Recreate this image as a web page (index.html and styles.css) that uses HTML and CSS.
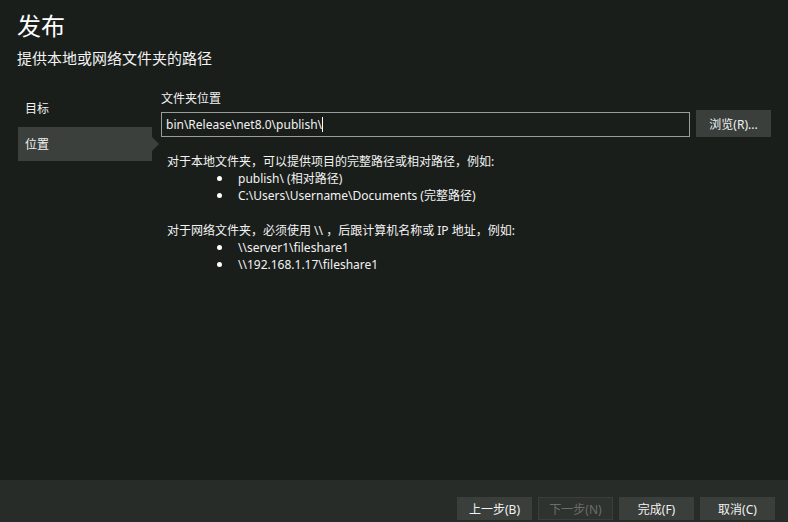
FILE: index.html
```html
<!DOCTYPE html>
<html lang="zh-CN">
<head>
    <meta charset="UTF-8">
    <meta name="viewport" content="width=device-width, initial-scale=1.0">
    <title>发布</title>
    <link rel="stylesheet" href="styles.css">
</head>
<body>
    <div class="window">
        <header class="head">
            <h1>发布</h1>
            <p>提供本地或网络文件夹的路径</p>
        </header>

        <div class="main">
            <nav class="steps">
                <div class="step">目标</div>
                <div class="step active">位置</div>
            </nav>

            <section class="panel">
                <label class="field-label">文件夹位置</label>
                <div class="path-row">
                    <div class="path-input">bin\Release\net8.0\publish\<span class="caret"></span></div>
                    <button class="btn browse">浏览(R)...</button>
                </div>

                <div class="help">
                    <p>对于本地文件夹，可以提供项目的完整路径或相对路径，例如:</p>
                    <ul>
                        <li>publish\ (相对路径)</li>
                        <li>C:\Users\Username\Documents (完整路径)</li>
                    </ul>
                    <p class="gap">对于网络文件夹，必须使用 \\ ，后跟计算机名称或 IP 地址，例如:</p>
                    <ul>
                        <li>\\server1\fileshare1</li>
                        <li>\\192.168.1.17\fileshare1</li>
                    </ul>
                </div>
            </section>
        </div>

        <footer class="foot">
            <button class="btn">上一步(B)</button>
            <button class="btn" disabled>下一步(N)</button>
            <button class="btn">完成(F)</button>
            <button class="btn">取消(C)</button>
        </footer>
    </div>
</body>
</html>
```

FILE: styles.css
```css
body {
    margin: 0;
    background-color: #1a1e1b;
    color: #f2f2f2;
    font-family: "Noto Sans", "Noto Sans CJK SC", sans-serif;
    font-size: 12px;
}
.window {
    width: 788px;
    height: 522px;
    display: flex;
    flex-direction: column;
    overflow: hidden;
}
.head {
    padding: 11px 0 0 17px;
}
.head h1 {
    margin: 0;
    font-size: 24px;
    line-height: 30px;
    font-weight: normal;
    color: #ffffff;
}
.head p {
    margin: 7px 0 0;
    font-size: 15px;
    line-height: 20px;
}
.main {
    flex: 1;
    display: flex;
    padding-top: 23px;
}
.steps {
    width: 134px;
    margin-left: 18px;
    display: flex;
    flex-direction: column;
    gap: 2px;
}
.step {
    position: relative;
    height: 34px;
    line-height: 36px;
    padding-left: 7px;
    font-size: 12px;
}
.step.active {
    background-color: #3b403c;
}
.step.active::after {
    content: "";
    position: absolute;
    right: -7px;
    top: 10px;
    border-top: 7px solid transparent;
    border-bottom: 7px solid transparent;
    border-left: 7px solid #3b403c;
}
.panel {
    margin-left: 9px;
    width: 610px;
}
.field-label {
    display: block;
    line-height: 16px;
    margin-bottom: 3px;
}
.path-row {
    display: flex;
    align-items: flex-end;
    gap: 6px;
}
.path-input {
    flex: 1;
    height: 25px;
    box-sizing: border-box;
    border: 1px solid #9b9d9b;
    padding: 0 4px;
    font-size: 12px;
    line-height: 23px;
    white-space: nowrap;
}
.caret {
    display: inline-block;
    width: 1px;
    height: 15px;
    background-color: #ffffff;
    vertical-align: -3px;
}
.btn {
    width: 75px;
    height: 23px;
    padding: 0;
    border: 1px solid #3a3f3c;
    background-color: #3a3f3c;
    color: #f2f2f2;
    font-family: inherit;
    font-size: 12px;
}
.btn:disabled {
    background-color: #2e3330;
    border-color: #3a3f3c;
    color: #6a6e6b;
}
.browse {
    height: 27px;
}
.help {
    margin-top: 16px;
    padding-left: 6px;
    line-height: 17px;
}
.help p {
    margin: 0;
}
.help p.gap {
    margin-top: 18px;
}
.help ul {
    list-style: none;
    margin: 0;
    padding-left: 71px;
}
.help li {
    position: relative;
}
.help li::before {
    content: "";
    position: absolute;
    left: -21px;
    top: 6px;
    width: 5px;
    height: 5px;
    border-radius: 50%;
    background-color: #ffffff;
}
.foot {
    height: 42px;
    background-color: #282c29;
    display: flex;
    justify-content: flex-end;
    align-items: flex-start;
    gap: 6px;
    padding: 17px 13px 0 0;
    box-sizing: border-box;
}
```
